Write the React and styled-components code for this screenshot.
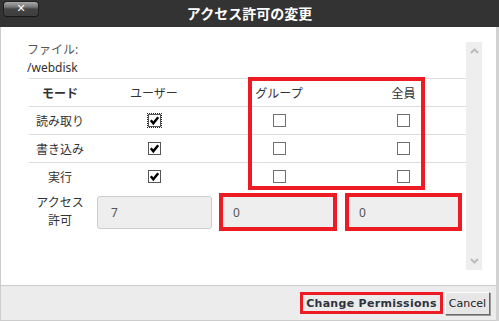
import React from 'react';
import styled, {createGlobalStyle} from "styled-components";

const GlobalStyle = createGlobalStyle`
  html, body {
    margin: 0;
    padding: 0;
    background: #fff;
  }
  body {
    font-family: "Noto Sans", "Noto Sans CJK JP", sans-serif;
  }
`

const Dialog = styled.div`
  width: 499px;
  height: 321px;
  display: flex;
  flex-direction: column;
  overflow: hidden;
`
const TitleBar = styled.div`
  height: 27px;
  flex: none;
  background: #333;
  display: grid;
  grid-template-columns: 1fr auto 1fr;
  align-items: center;
`
const CloseButton = styled.button`
  justify-self: start;
  align-self: start;
  margin: 2px 0 0 4px;
  width: 34px;
  height: 14px;
  padding: 0;
  border: none;
  border-radius: 3px;
  background: linear-gradient(#a8a8a8 0%, #777 35%, #444 50%, #3e3e3e 100%);
  box-shadow: 0 1px 1px #1a1a1a, 0 0 0 1px #222;
  color: #fff;
  font: bold 11px "DejaVu Sans", sans-serif;
  line-height: 14px;
`
const Title = styled.h1`
  margin: 0;
  color: #fff;
  font-size: 14px;
  font-weight: bold;
  font-family: "Noto Sans CJK JP", sans-serif;
  line-height: 27px;
`
const Frame = styled.div`
  flex: 1;
  display: flex;
  flex-direction: column;
  border-left: 1px solid #ccc;
  border-right: 3px solid #d2d2d2;
`
const Body = styled.div`
  flex: 1;
  display: flex;
`
const Content = styled.div`
  flex: 1;
  padding: 14px 0 0 26px;
`
const FileLabel = styled.div`
  font-size: 12px;
  line-height: 18px;
  color: ${props => props.muted ? "#555" : "#333"};
`
const TableWrap = styled.div`
  position: relative;
  margin: 1px 0 0 2px;
  width: 437px;
`
const Row = styled.div`
  display: grid;
  grid-template-columns: 62px 126px 124px 125px;
  height: 28px;
  border-top: 1px solid #ddd;
  box-sizing: border-box;
  align-items: center;
  justify-items: center;
  font-size: 12px;
  color: #333;
  &:last-of-type {
    height: 29px;
    border-bottom: 1px solid #ddd;
  }
`
const Head = styled.span`
  font-weight: ${props => props.bold ? "bold" : "normal"};
`
const Box = styled.span`
  width: 13px;
  height: 13px;
  box-sizing: border-box;
  border: 1px solid ${props => props.checked ? "#555" : "#707070"};
  background: #fff;
  display: flex;
  align-items: center;
  justify-content: center;
  outline: ${props => props.focused ? "1px dotted #222" : "none"};
  outline-offset: 0;
`
const Highlight = styled.div`
  position: absolute;
  left: 219px;
  top: -1px;
  width: 177px;
  height: 113px;
  box-sizing: border-box;
  border: 4px solid #ed1c24;
  pointer-events: none;
`
const AccessRow = styled.div`
  display: flex;
  align-items: center;
  margin: 3px 0 0 2px;
  height: 38px;
`
const AccessLabel = styled.div`
  width: 62px;
  text-align: center;
  font-size: 12px;
  line-height: 18px;
  color: #333;
`
const ValueBox = styled.div`
  width: ${props => props.w}px;
  height: ${props => props.marked ? 38 : 33}px;
  margin-left: ${props => props.gap}px;
  box-sizing: border-box;
  background: #eee;
  border: ${props => props.marked ? "4px solid #ed1c24" : "1px solid #ccc"};
  border-radius: ${props => props.marked ? "0" : "3px"};
  display: flex;
  align-items: center;
  padding-left: ${props => props.marked ? 10 : 13}px;
  font-size: 12px;
  color: #555;
`
const Scrollbar = styled.div`
  width: 16px;
  margin: 15px 14px 15px 0;
  background: #eee;
  display: flex;
  flex-direction: column;
  justify-content: space-between;
  align-items: center;
  padding: 6px 0;
  box-sizing: border-box;
`
const Footer = styled.div`
  height: 36px;
  flex: none;
  box-sizing: border-box;
  background: #ececec;
  border-top: 1px solid #ccc;
  border-bottom: 1px solid #ccc;
  display: flex;
  justify-content: flex-end;
  align-items: center;
  padding-right: 6px;
  gap: 2px;
`
const PrimaryButton = styled.button`
  height: 22px;
  width: 143px;
  box-sizing: border-box;
  border: 3px solid #ed1c24;
  background: #ebebeb;
  color: #2f3340;
  font: bold 11px "DejaVu Sans", sans-serif;
  padding: 0;
  letter-spacing: 0.3px;
`
const SecondaryButton = styled.button`
  height: 23px;
  width: 45px;
  box-sizing: border-box;
  border: 1px solid;
  border-color: #fff #6b6b6b #6b6b6b #fff;
  box-shadow: 1px 1px 0 #9a9a9a;
  background: #e6e6e6;
  color: #222;
  font: 11px "DejaVu Sans", sans-serif;
  padding: 0;
`

const Check = () => (
    <svg width="11" height="11" viewBox="0 0 11 11">
        <path d="M1.8 5.3 L4.3 8.2 L9.2 2.3" fill="none" stroke="#000" strokeWidth="2.5"/>
    </svg>
);

const Chevron = ({down}) => (
    <svg width="9" height="6" viewBox="0 0 9 6">
        <path d={down ? "M1 1 L4.5 4.5 L8 1" : "M1 5 L4.5 1.5 L8 5"} fill="none" stroke="#bbb" strokeWidth="2"/>
    </svg>
);

const modes = [
    {label: "読み取り", focused: true},
    {label: "書き込み"},
    {label: "実行"},
];

const App = () => {
    return (
        <Dialog>
            <GlobalStyle/>
            <TitleBar>
                <CloseButton>✕</CloseButton>
                <Title>アクセス許可の変更</Title>
                <span/>
            </TitleBar>
            <Frame>
                <Body>
                    <Content>
                        <FileLabel muted>ファイル:</FileLabel>
                        <FileLabel>/webdisk</FileLabel>
                        <TableWrap>
                            <Row>
                                <Head bold>モード</Head>
                                <Head>ユーザー</Head>
                                <Head>グループ</Head>
                                <Head>全員</Head>
                            </Row>
                            {modes.map(m => (
                                <Row key={m.label}>
                                    <span>{m.label}</span>
                                    <Box checked focused={m.focused}><Check/></Box>
                                    <Box/>
                                    <Box/>
                                </Row>
                            ))}
                            <Highlight/>
                        </TableWrap>
                        <AccessRow>
                            <AccessLabel>アクセス<br/>許可</AccessLabel>
                            <ValueBox w={115} gap={6}>7</ValueBox>
                            <ValueBox w={118} gap={7} marked>0</ValueBox>
                            <ValueBox w={117} gap={8} marked>0</ValueBox>
                        </AccessRow>
                    </Content>
                    <Scrollbar>
                        <Chevron/>
                        <Chevron down/>
                    </Scrollbar>
                </Body>
                <Footer>
                    <PrimaryButton>Change Permissions</PrimaryButton>
                    <SecondaryButton>Cancel</SecondaryButton>
                </Footer>
            </Frame>
        </Dialog>
    );
}

export default App;
